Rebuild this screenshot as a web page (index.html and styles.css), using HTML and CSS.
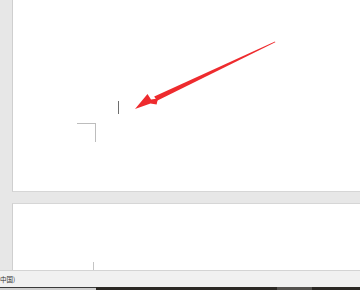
FILE: index.html
```html
<!DOCTYPE html>
<html lang="zh">
<head>
<meta charset="utf-8">
<title>文档</title>
<link rel="stylesheet" href="styles.css">
</head>
<body>
<div class="workspace">
  <div class="page page-first">
    <div class="caret"></div>
    <div class="corner-mark"></div>
  </div>
  <div class="page page-second">
    <div class="corner-tick"></div>
  </div>
</div>
<div class="statusbar"><span class="lang">中国)</span></div>
<div class="taskbar">
  <div class="tb-left"></div>
  <div class="tb-mid"></div>
  <div class="tb-btn"></div>
  <div class="tb-rest"></div>
</div>
<svg class="annotation" width="360" height="290" viewBox="0 0 360 290" aria-hidden="true">
  <polygon fill="#ee2b2e" points="275,41.6 275.3,42.3 157,100.8 154.2,96.6"/>
  <polygon fill="#ee2b2e" points="135,109 147.5,94 151,99.5 158,98.5 156.6,104.5 150.5,103.5"/>
</svg>
</body>
</html>
```
FILE: styles.css
```css
html, body {
  margin: 0;
  padding: 0;
}
body {
  width: 360px;
  height: 290px;
  overflow: hidden;
  background: #e7e7e7;
  font-family: "Noto Sans CJK SC", "Noto Sans", sans-serif;
  position: relative;
}
.workspace {
  display: flex;
  flex-direction: column;
  height: 270px;
  gap: 11px;
}
.page {
  margin-left: 12px;
  background: #ffffff;
  border-left: 1px solid #cfcfcf;
  box-sizing: border-box;
}
.page-first {
  height: 192px;
  padding-top: 101px;
  border-bottom: 1px solid #d6d6d6;
}
.page-second {
  flex: 1;
  border-top: 1px solid #d6d6d6;
  padding-top: 58px;
}
.caret {
  margin-left: 105px;
  width: 1px;
  height: 13px;
  background: #6e6e6e;
}
.corner-mark {
  margin-top: 9px;
  margin-left: 64px;
  width: 19px;
  height: 19px;
  box-sizing: border-box;
  border-top: 1px solid #bdbdbd;
  border-right: 1px solid #bdbdbd;
}
.corner-tick {
  margin-left: 80px;
  width: 1px;
  height: 8px;
  background: #c4c4c4;
}
.statusbar {
  height: 17px;
  box-sizing: border-box;
  border-top: 1px solid #d4d4d4;
  background: #f1f1f1;
  display: flex;
  align-items: center;
  overflow: hidden;
}
.lang {
  font-size: 6.5px;
  line-height: 9px;
  color: #333333;
  white-space: nowrap;
}
.taskbar {
  height: 3px;
  display: flex;
}
.tb-left {
  width: 96px;
  background: #cfcfcf;
  border-top: 1px solid #3a3a3a;
  box-sizing: border-box;
}
.tb-mid {
  width: 181px;
  background: #2c2925;
}
.tb-btn {
  width: 35px;
  background: #54524f;
}
.tb-rest {
  flex: 1;
  background: #2c2925;
}
.annotation {
  position: absolute;
  left: 0;
  top: 0;
  pointer-events: none;
}
```
